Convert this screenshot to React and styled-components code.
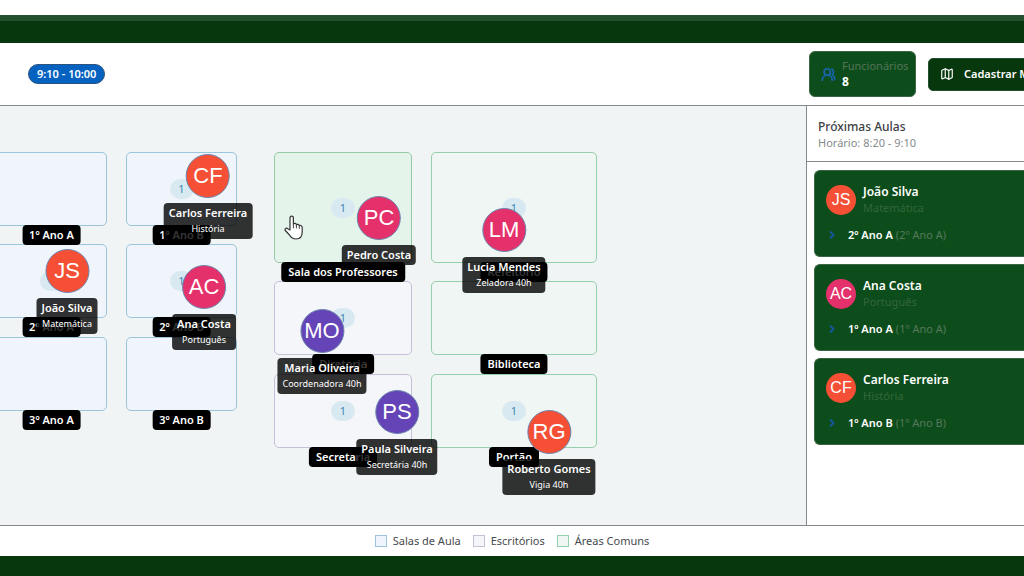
import React from "react";
import styled, { createGlobalStyle } from "styled-components";
import { Map as MapIcon, ChevronRight, UsersRound } from "lucide-react";

const GlobalStyle = createGlobalStyle`
  * { box-sizing: border-box; }
  body {
    margin: 0;
    background: #fff;
    color: #474a4d;
    font-family: "Noto Sans", "Open Sans", sans-serif;
    font-size: 12px;
    line-height: 16px;
  }
  h2, h3, p, ul { margin: 0; padding: 0; }
  ul { list-style: none; }
`;

const line = "#848989";

const Page = styled.div`
  display: flex;
  flex-direction: column;
  min-height: 100vh;
  padding-top: 15px;
  overflow: hidden;
`;

const TitleBar = styled.div`
  height: 28px;
  background: #06370d;
  border-top: 6px solid #23502e;
`;

const Toolbar = styled.header`
  display: flex;
  align-items: center;
  justify-content: space-between;
  height: 63px;
  padding-left: 28px;
  border-bottom: 1px solid ${line};
`;

const TimeBadge = styled.span`
  padding: 1px 8px;
  border: 1px solid #2b5380;
  border-radius: 10px;
  background: #0662c0;
  color: #fff;
  font-size: 11px;
  font-weight: 600;
`;

const Actions = styled.div`
  display: flex;
  flex: 0 0 215px;
  align-items: center;
  gap: 12px;
  overflow: hidden;
`;

const Stat = styled.div`
  display: flex;
  flex: 0 0 107px;
  align-items: center;
  gap: 6px;
  height: 46px;
  padding-left: 11px;
  border: 1px solid #3b6543;
  border-radius: 6px;
  background: #0d4d1b;
  color: #1763a6;
`;

const StatLabel = styled.p`
  color: #55745a;
  font-size: 11px;
`;

const StatValue = styled.p`
  color: #fff;
  font-weight: 700;
`;

const RegisterButton = styled.button`
  display: flex;
  flex: none;
  align-items: center;
  gap: 10px;
  height: 33px;
  padding: 0 11px;
  border: 1px solid #23502e;
  border-radius: 5px;
  background: #06370d;
  color: #fff;
  font: 600 11px/16px "Noto Sans", "Open Sans", sans-serif;
  white-space: nowrap;
`;

const Workspace = styled.div`
  display: flex;
  flex: 1;
`;

const FloorPlan = styled.main`
  position: relative;
  flex: 1;
  min-height: 419px;
  overflow: hidden;
  background: #f1f4f5;
`;

const tones = {
  classroom: { line: "#9cc4dc", fill: "#eff5fa" },
  office: { line: "#c5bfd8", fill: "#f5f6fa" },
  common: { line: "#94d0ab", fill: "#eff6f3" },
  active: { line: "#94c9a6", fill: "#e4f4ea" },
};

const RoomBox = styled.section`
  position: absolute;
  left: ${(p) => p.$x}px;
  top: ${(p) => p.$y}px;
  display: flex;
  align-items: center;
  justify-content: center;
  width: ${(p) => p.$w}px;
  height: ${(p) => p.$h}px;
  border: 1px solid ${(p) => tones[p.$tone].line};
  border-radius: 5px;
  background: ${(p) => tones[p.$tone].fill};
`;

const Occupancy = styled.span`
  width: 24px;
  border-radius: 10px;
  background: #d9e9f1;
  color: #3d87b5;
  font-size: 11px;
  line-height: 20px;
  text-align: center;
`;

const RoomName = styled.h3`
  position: absolute;
  top: 100%;
  left: 50%;
  z-index: ${(p) => (p.$raised ? 3 : 1)};
  padding: 2px 7px;
  border-radius: 4px;
  background: #000;
  color: #fff;
  font-size: 11px;
  font-weight: 600;
  transform: translateX(-50%);
  white-space: nowrap;
`;

const Person = styled.div`
  position: absolute;
  left: ${(p) => p.$x}px;
  top: ${(p) => p.$y}px;
  z-index: 2;
  display: flex;
  flex-direction: column;
  align-items: center;
  gap: 5px;
  transform: translate(-50%, -22px);
`;

const Avatar = styled.span`
  display: flex;
  flex: none;
  align-items: center;
  justify-content: center;
  width: ${(p) => (p.$large ? 44 : 30)}px;
  height: ${(p) => (p.$large ? 44 : 30)}px;
  border: ${(p) => (p.$large ? "1px solid #6c83ad" : "0")};
  border-radius: 50%;
  background: ${(p) => p.$color};
  color: #fff;
  font-family: "Liberation Sans", Arial, sans-serif;
  font-size: ${(p) => (p.$large ? 22 : 16)}px;
`;

const NameTag = styled.div`
  padding: 2px 5px;
  border-radius: 4px;
  background: rgba(0, 0, 0, 0.8);
  color: #fff;
  font-size: 11px;
  font-weight: 600;
  text-align: center;
  white-space: nowrap;
`;

const Role = styled.p`
  font-size: 9px;
  font-weight: 400;
`;

const Pointer = styled.svg`
  position: absolute;
  left: 284px;
  top: 109px;
  z-index: 4;
`;

const Sidebar = styled.aside`
  flex: 0 0 218px;
  overflow: hidden;
  border-left: 1px solid ${line};
`;

const SidebarHeader = styled.div`
  padding: 13px 11px 10px;
  border-bottom: 1px solid ${line};
`;

const SidebarTitle = styled.h2`
  color: #3c4043;
  font-size: 12px;
  font-weight: 500;
`;

const Schedule = styled.p`
  color: #868a8c;
  font-size: 11px;
`;

const LessonList = styled.ul`
  display: flex;
  flex-direction: column;
  gap: 7px;
  padding: 8px 0 8px 7px;
`;

const Lesson = styled.li`
  height: 87px;
  padding: 13px 11px;
  border: 1px solid #3b6543;
  border-right: 0;
  border-radius: 6px 0 0 6px;
  background: #0d4d1b;
  color: #fff;
`;

const Teacher = styled.div`
  display: flex;
  align-items: center;
  gap: 7px;
`;

const TeacherName = styled.h3`
  font-size: 12px;
  font-weight: 600;
`;

const Subject = styled.p`
  color: #33663d;
  font-size: 11px;
`;

const Place = styled.p`
  display: flex;
  align-items: center;
  gap: 3px;
  margin-top: 11px;
  font-size: 11px;
  font-weight: 600;

  svg { margin-right: 7px; color: #15569a; }
`;

const PlaceNote = styled.span`
  color: #55785b;
  font-weight: 400;
`;

const Legend = styled.footer`
  display: flex;
  align-items: center;
  justify-content: center;
  gap: 12px;
  height: 31px;
  border-top: 1px solid ${line};
  font-size: 11px;
`;

const LegendItem = styled.span`
  display: flex;
  align-items: center;
  gap: 6px;
`;

const Swatch = styled.i`
  width: 12px;
  height: 12px;
  border: 1px solid ${(p) => tones[p.$tone].line};
  background: ${(p) => tones[p.$tone].fill};
`;

const BottomBar = styled.div`
  height: 20px;
  background: #06370d;
`;

const rooms = [
  { name: "1º Ano A", x: -4, y: 46, w: 111, h: 74, tone: "classroom" },
  { name: "1º Ano B", x: 126, y: 46, w: 111, h: 74, tone: "classroom", count: 1 },
  { name: "2º Ano A", x: -4, y: 138, w: 111, h: 74, tone: "classroom", count: 1 },
  { name: "2º Ano B", x: 126, y: 138, w: 111, h: 74, tone: "classroom", count: 1 },
  { name: "3º Ano A", x: -4, y: 231, w: 111, h: 74, tone: "classroom" },
  { name: "3º Ano B", x: 126, y: 231, w: 111, h: 74, tone: "classroom" },
  { name: "Sala dos Professores", x: 274, y: 46, w: 138, h: 111, tone: "active", count: 1, raised: true },
  { name: "Refeitório", x: 431, y: 46, w: 166, h: 111, tone: "common", count: 1 },
  { name: "Diretoria", x: 274, y: 175, w: 138, h: 74, tone: "office", count: 1 },
  { name: "Biblioteca", x: 431, y: 175, w: 166, h: 74, tone: "common" },
  { name: "Secretaria", x: 274, y: 268, w: 138, h: 74, tone: "office", count: 1 },
  { name: "Portão", x: 431, y: 268, w: 166, h: 74, tone: "common", count: 1 },
];

const red = "#f55036";
const pink = "#e5316b";
const purple = "#6544b8";

const people = [
  { initials: "CF", name: "Carlos Ferreira", role: "História", x: 208, y: 70, color: red },
  { initials: "JS", name: "João Silva", role: "Matemática", x: 67, y: 165, color: red },
  { initials: "AC", name: "Ana Costa", role: "Português", x: 204, y: 181, color: pink },
  { initials: "PC", name: "Pedro Costa", x: 379, y: 112, color: pink },
  { initials: "LM", name: "Lucia Mendes", role: "Zeladora 40h", x: 504, y: 124, color: pink },
  { initials: "MO", name: "Maria Oliveira", role: "Coordenadora 40h", x: 322, y: 225, color: purple },
  { initials: "PS", name: "Paula Silveira", role: "Secretária 40h", x: 397, y: 306, color: purple },
  { initials: "RG", name: "Roberto Gomes", role: "Vigia 40h", x: 549, y: 326, color: red },
];

const lessons = [
  { initials: "JS", name: "João Silva", subject: "Matemática", room: "2º Ano A", color: red },
  { initials: "AC", name: "Ana Costa", subject: "Português", room: "1º Ano A", color: pink },
  { initials: "CF", name: "Carlos Ferreira", subject: "História", room: "1º Ano B", color: red },
];

const legend = [
  { label: "Salas de Aula", tone: "classroom" },
  { label: "Escritórios", tone: "office" },
  { label: "Áreas Comuns", tone: "common" },
];

export default function App() {
  return (
    <>
      <GlobalStyle />
      <Page>
        <TitleBar />
        <Toolbar>
          <TimeBadge>9:10 - 10:00</TimeBadge>
          <Actions>
            <Stat>
              <UsersRound size={15} strokeWidth={3} />
              <div>
                <StatLabel>Funcionários</StatLabel>
                <StatValue>8</StatValue>
              </div>
            </Stat>
            <RegisterButton type="button">
              <MapIcon size={14} />
              Cadastrar Mapa
            </RegisterButton>
          </Actions>
        </Toolbar>
        <Workspace>
          <FloorPlan>
            {rooms.map((r) => (
              <RoomBox key={r.name} $x={r.x} $y={r.y} $w={r.w} $h={r.h} $tone={r.tone}>
                {r.count && <Occupancy>{r.count}</Occupancy>}
                <RoomName $raised={r.raised}>{r.name}</RoomName>
              </RoomBox>
            ))}
            {people.map((p) => (
              <Person key={p.name} $x={p.x} $y={p.y}>
                <Avatar $large $color={p.color}>{p.initials}</Avatar>
                <NameTag>
                  {p.name}
                  {p.role && <Role>{p.role}</Role>}
                </NameTag>
              </Person>
            ))}
            <Pointer width="20" height="25" viewBox="0 0 20 25" aria-hidden="true">
              <path
                d="M6 15V3.2C6 .5 9.4.5 9.4 3.2V9c.8-1 2.8-.7 3 .7 1-.8 2.7-.3 2.9 1 1.200-.6 2.900.1 2.900 1.700V17c0 4-2 7-6.200 7-3.500 0-5-1.400-6.500-4L1.300 15.500c-1-1.800 1-3 2.500-1.700Z"
                fill="#fff"
                stroke="#333"
                strokeWidth="1.200"
                strokeLinejoin="round"
              />
              <path d="M9.400 9v4M12.400 10v3M15.300 11v2.500" stroke="#444" strokeLinecap="round" />
            </Pointer>
          </FloorPlan>
          <Sidebar>
            <SidebarHeader>
              <SidebarTitle>Próximas Aulas</SidebarTitle>
              <Schedule>Horário: 8:20 - 9:10</Schedule>
            </SidebarHeader>
            <LessonList>
              {lessons.map((l) => (
                <Lesson key={l.name}>
                  <Teacher>
                    <Avatar $color={l.color}>{l.initials}</Avatar>
                    <div>
                      <TeacherName>{l.name}</TeacherName>
                      <Subject>{l.subject}</Subject>
                    </div>
                  </Teacher>
                  <Place>
                    <ChevronRight size={12} strokeWidth={4} />
                    {l.room}
                    <PlaceNote>({l.room})</PlaceNote>
                  </Place>
                </Lesson>
              ))}
            </LessonList>
          </Sidebar>
        </Workspace>
        <Legend>
          {legend.map((item) => (
            <LegendItem key={item.label}>
              <Swatch $tone={item.tone} />
              {item.label}
            </LegendItem>
          ))}
        </Legend>
        <BottomBar />
      </Page>
    </>
  );
}
